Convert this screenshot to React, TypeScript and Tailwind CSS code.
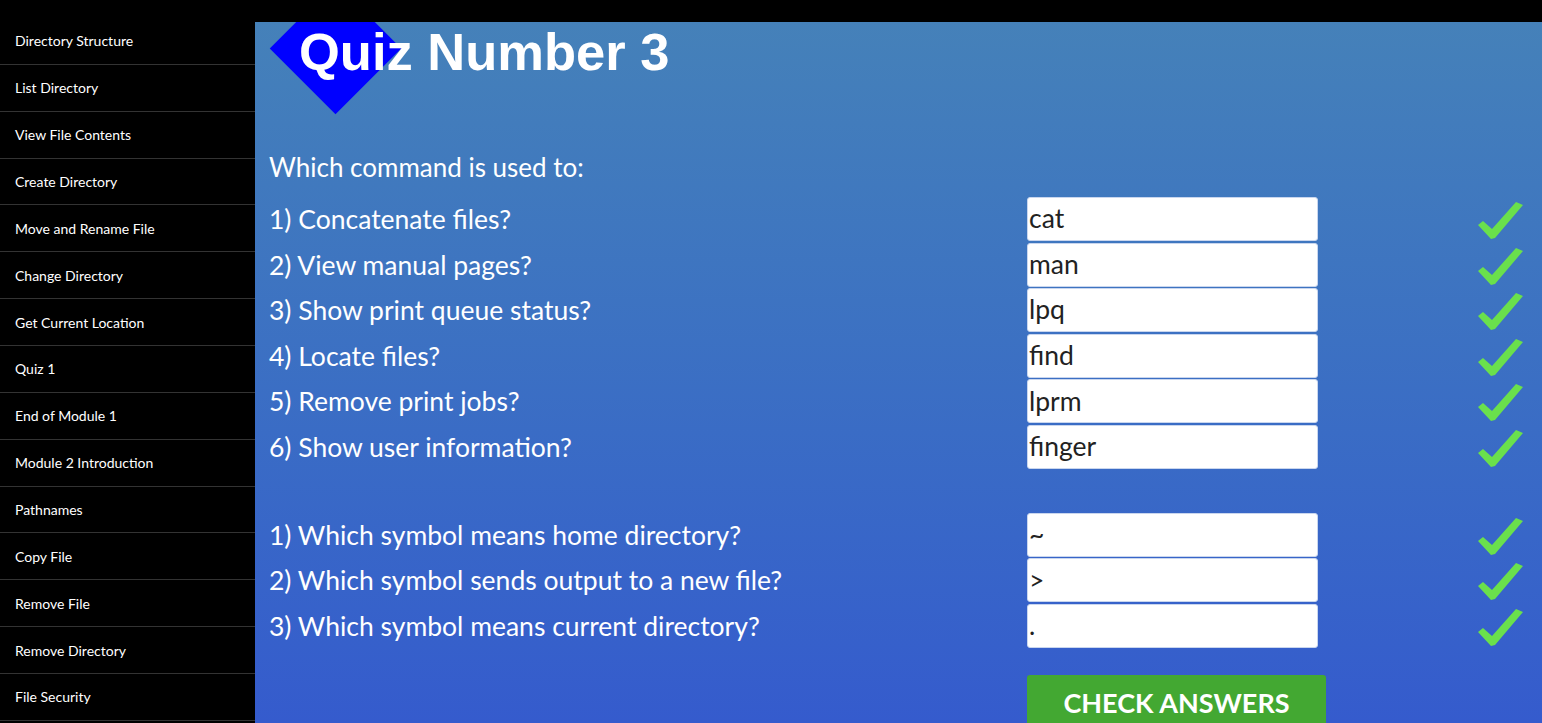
import React from "react";

const nav = [
  "Directory Structure",
  "List Directory",
  "View File Contents",
  "Create Directory",
  "Move and Rename File",
  "Change Directory",
  "Get Current Location",
  "Quiz 1",
  "End of Module 1",
  "Module 2 Introduction",
  "Pathnames",
  "Copy File",
  "Remove File",
  "Remove Directory",
  "File Security",
];

const group1 = [
  ["1) Concatenate files?", "cat"],
  ["2) View manual pages?", "man"],
  ["3) Show print queue status?", "lpq"],
  ["4) Locate files?", "find"],
  ["5) Remove print jobs?", "lprm"],
  ["6) Show user information?", "finger"],
];

const group2 = [
  ["1) Which symbol means home directory?", "~"],
  ["2) Which symbol sends output to a new file?", ">"],
  ["3) Which symbol means current directory?", "."],
];

function Check() {
  return (
    <svg width="48" height="42" viewBox="0 0 48 42" className="ml-[158px]">
      <path
        d="M2 27 L7 23 L16 31 L40 4 L47 7 L19 40 L15 41 Z"
        fill="#6ae04c"
      />
    </svg>
  );
}

function Row({ q, a }: { q: string; a: string }) {
  return (
    <div className="grid h-[44px] grid-cols-[758px_291px_auto] items-center">
      <div className="text-[26.5px] leading-[36px] text-white">{q}</div>
      <div className="flex h-[44px] items-center rounded-[3px] border border-[#c9d6ee] bg-white pl-[1px] text-[26.5px] text-[#222]">
        {a}
      </div>
      <Check />
    </div>
  );
}

export default function App() {
  return (
    <div
      className="flex h-[723px] w-[1542px] overflow-hidden bg-black"
      style={{ fontFamily: "Lato, 'Open Sans', sans-serif" }}
    >
      <aside className="w-[255px] shrink-0 bg-black pt-[18px]">
        {nav.map((n) => (
          <div
            key={n}
            className="flex h-[46.86px] items-center border-b border-[#333333] pl-[15px] text-[14px] text-white"
          >
            {n}
          </div>
        ))}
      </aside>
      <main className="relative mt-[22px] flex-1 overflow-hidden bg-gradient-to-b from-[#4581b9] to-[#355bcd] pl-[14px]">
        <div className="absolute left-[34px] top-[-20px] h-[93px] w-[93px] rotate-45 bg-[#0000ff]" />
        <h1
          className="relative ml-[30px] mt-[4px] text-[52.5px] font-bold leading-[52px] text-white"
          style={{ fontFamily: "'Liberation Sans', Arial, sans-serif" }}
        >
          Quiz Number 3
        </h1>
        <div className="mt-[71px] text-[26px] leading-[36px] text-white">
          Which command is used to:
        </div>
        <div className="mt-[12px] flex flex-col gap-y-[1.6px]">
          {group1.map(([q, a]) => (
            <Row key={q} q={q} a={a} />
          ))}
        </div>
        <div className="mt-[44px] flex flex-col gap-y-[1.5px]">
          {group2.map(([q, a]) => (
            <Row key={q} q={q} a={a} />
          ))}
        </div>
        <div className="ml-[758px] mt-[27px] flex h-[56px] w-[299px] items-center justify-center rounded-[3px] bg-[#43a832] text-[27px] font-bold uppercase text-white">
          Check Answers
        </div>
      </main>
    </div>
  );
}
